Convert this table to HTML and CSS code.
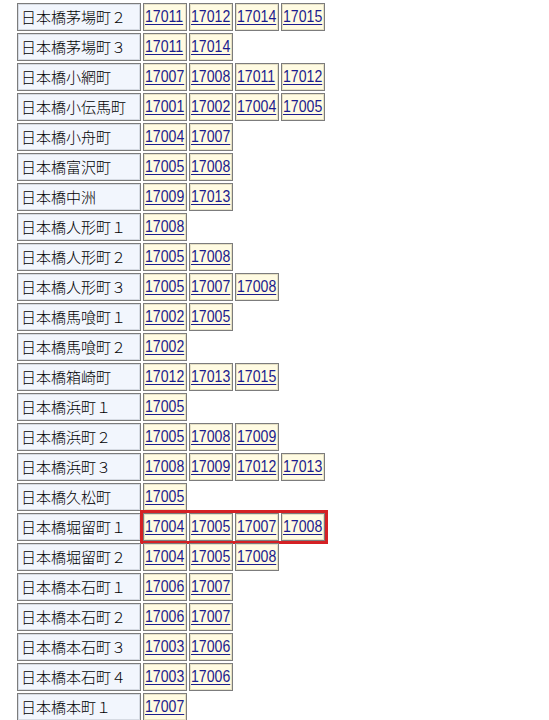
FILE: index.html
```html
<!DOCTYPE html>
<html lang="ja">
<head>
<meta charset="utf-8">
<title>日本橋 郵便番号</title>
<link rel="stylesheet" href="styles.css">
</head>
<body>
<div class="list">
  <div class="row"><div class="name">日本橋茅場町２</div><div class="codes"><a class="code" href="#"><span class="num">17011</span></a><a class="code" href="#"><span class="num">17012</span></a><a class="code" href="#"><span class="num">17014</span></a><a class="code" href="#"><span class="num">17015</span></a></div></div>
  <div class="row"><div class="name">日本橋茅場町３</div><div class="codes"><a class="code" href="#"><span class="num">17011</span></a><a class="code" href="#"><span class="num">17014</span></a></div></div>
  <div class="row"><div class="name">日本橋小網町</div><div class="codes"><a class="code" href="#"><span class="num">17007</span></a><a class="code" href="#"><span class="num">17008</span></a><a class="code" href="#"><span class="num">17011</span></a><a class="code" href="#"><span class="num">17012</span></a></div></div>
  <div class="row"><div class="name">日本橋小伝馬町</div><div class="codes"><a class="code" href="#"><span class="num">17001</span></a><a class="code" href="#"><span class="num">17002</span></a><a class="code" href="#"><span class="num">17004</span></a><a class="code" href="#"><span class="num">17005</span></a></div></div>
  <div class="row"><div class="name">日本橋小舟町</div><div class="codes"><a class="code" href="#"><span class="num">17004</span></a><a class="code" href="#"><span class="num">17007</span></a></div></div>
  <div class="row"><div class="name">日本橋富沢町</div><div class="codes"><a class="code" href="#"><span class="num">17005</span></a><a class="code" href="#"><span class="num">17008</span></a></div></div>
  <div class="row"><div class="name">日本橋中洲</div><div class="codes"><a class="code" href="#"><span class="num">17009</span></a><a class="code" href="#"><span class="num">17013</span></a></div></div>
  <div class="row"><div class="name">日本橋人形町１</div><div class="codes"><a class="code" href="#"><span class="num">17008</span></a></div></div>
  <div class="row"><div class="name">日本橋人形町２</div><div class="codes"><a class="code" href="#"><span class="num">17005</span></a><a class="code" href="#"><span class="num">17008</span></a></div></div>
  <div class="row"><div class="name">日本橋人形町３</div><div class="codes"><a class="code" href="#"><span class="num">17005</span></a><a class="code" href="#"><span class="num">17007</span></a><a class="code" href="#"><span class="num">17008</span></a></div></div>
  <div class="row"><div class="name">日本橋馬喰町１</div><div class="codes"><a class="code" href="#"><span class="num">17002</span></a><a class="code" href="#"><span class="num">17005</span></a></div></div>
  <div class="row"><div class="name">日本橋馬喰町２</div><div class="codes"><a class="code" href="#"><span class="num">17002</span></a></div></div>
  <div class="row"><div class="name">日本橋箱崎町</div><div class="codes"><a class="code" href="#"><span class="num">17012</span></a><a class="code" href="#"><span class="num">17013</span></a><a class="code" href="#"><span class="num">17015</span></a></div></div>
  <div class="row"><div class="name">日本橋浜町１</div><div class="codes"><a class="code" href="#"><span class="num">17005</span></a></div></div>
  <div class="row"><div class="name">日本橋浜町２</div><div class="codes"><a class="code" href="#"><span class="num">17005</span></a><a class="code" href="#"><span class="num">17008</span></a><a class="code" href="#"><span class="num">17009</span></a></div></div>
  <div class="row"><div class="name">日本橋浜町３</div><div class="codes"><a class="code" href="#"><span class="num">17008</span></a><a class="code" href="#"><span class="num">17009</span></a><a class="code" href="#"><span class="num">17012</span></a><a class="code" href="#"><span class="num">17013</span></a></div></div>
  <div class="row"><div class="name">日本橋久松町</div><div class="codes"><a class="code" href="#"><span class="num">17005</span></a></div></div>
  <div class="row"><div class="name">日本橋堀留町１</div><div class="codes highlight"><a class="code" href="#"><span class="num">17004</span></a><a class="code" href="#"><span class="num">17005</span></a><a class="code" href="#"><span class="num">17007</span></a><a class="code" href="#"><span class="num">17008</span></a></div></div>
  <div class="row"><div class="name">日本橋堀留町２</div><div class="codes"><a class="code" href="#"><span class="num">17004</span></a><a class="code" href="#"><span class="num">17005</span></a><a class="code" href="#"><span class="num">17008</span></a></div></div>
  <div class="row"><div class="name">日本橋本石町１</div><div class="codes"><a class="code" href="#"><span class="num">17006</span></a><a class="code" href="#"><span class="num">17007</span></a></div></div>
  <div class="row"><div class="name">日本橋本石町２</div><div class="codes"><a class="code" href="#"><span class="num">17006</span></a><a class="code" href="#"><span class="num">17007</span></a></div></div>
  <div class="row"><div class="name">日本橋本石町３</div><div class="codes"><a class="code" href="#"><span class="num">17003</span></a><a class="code" href="#"><span class="num">17006</span></a></div></div>
  <div class="row"><div class="name">日本橋本石町４</div><div class="codes"><a class="code" href="#"><span class="num">17003</span></a><a class="code" href="#"><span class="num">17006</span></a></div></div>
  <div class="row"><div class="name">日本橋本町１</div><div class="codes"><a class="code" href="#"><span class="num">17007</span></a></div></div>
</div>
</body>
</html>
```
FILE: styles.css
```css
html, body {
  margin: 0;
  padding: 0;
  background: #ffffff;
}
body {
  padding: 3px 0 0 17px;
  font-family: "Noto Sans CJK JP", sans-serif;
}
.list {
  display: flex;
  flex-direction: column;
  gap: 2px;
}
.row {
  display: flex;
  gap: 2px;
  height: 28px;
}
.name {
  width: 124px;
  height: 28px;
  box-sizing: border-box;
  border: 1px solid #7c7c7c;
  box-shadow: inset 0 0 0 1px #d6dbe3;
  background: #f2f6fd;
  color: #000;
  font-size: 15px;
  font-weight: 300;
  line-height: 26px;
  padding-left: 3px;
  white-space: nowrap;
}
.codes {
  display: flex;
  gap: 2px;
}
.code {
  width: 44px;
  height: 28px;
  box-sizing: border-box;
  overflow: hidden;
  border: 1px solid #7c7c7c;
  box-shadow: inset 0 0 0 1px #e6e0c4;
  background: #fffbe2;
  color: #1c1c8e;
  font-family: "Liberation Sans", sans-serif;
  font-size: 17px;
  line-height: 26px;
  padding-left: 1px;
  text-decoration: underline;
  text-underline-offset: 2px;
  white-space: nowrap;
}
.num {
  display: inline-block;
  transform: scaleX(0.83);
  transform-origin: 0 50%;
  text-decoration: underline;
  text-underline-offset: 2px;
}
.highlight {
  outline: 3px solid #d42024;
  outline-offset: 0;
}
```
